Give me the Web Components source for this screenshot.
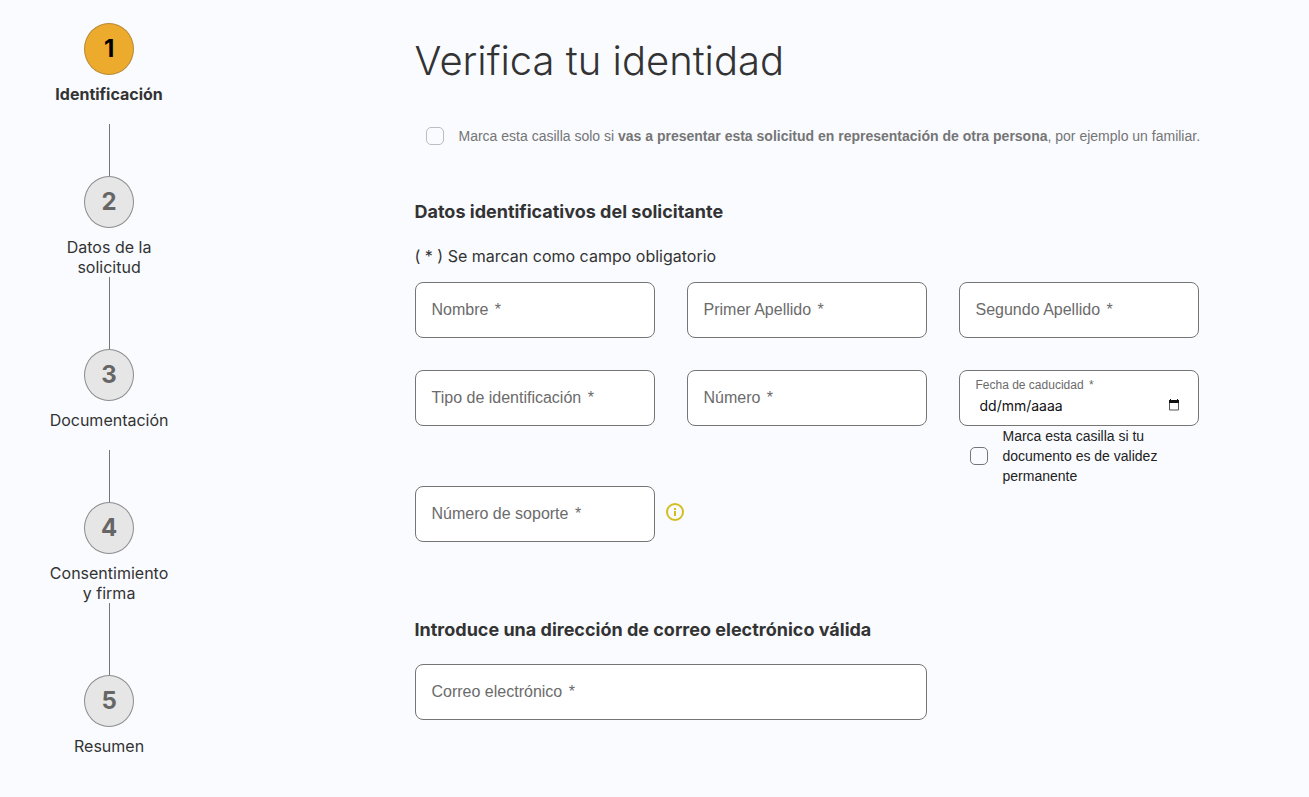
<!DOCTYPE html>
<html lang="es">
<head>
<meta charset="utf-8">
<meta name="viewport" content="width=device-width, initial-scale=1">
<title>Verifica tu identidad</title>
<style>
	body {
		margin: 0;
		background: #f9fbff;
		color: #333;
		font: 16px/20px Inter, sans-serif;
	}
</style>
</head>
<body>

<app-layout>
	<step-list slot="aside">
		<step-item number="1" active>Identificación</step-item>
		<step-item number="2" tall>Datos de la solicitud</step-item>
		<step-item number="3">Documentación</step-item>
		<step-item number="4" tall>Consentimiento y firma</step-item>
		<step-item number="5">Resumen</step-item>
	</step-list>

	<page-title>Verifica tu identidad</page-title>
	<check-field muted>Marca esta casilla solo si <b>vas a presentar esta solicitud en representación de otra persona</b>, por ejemplo un familiar.</check-field>

	<form-section heading="Datos identificativos del solicitante" note="( * ) Se marcan como campo obligatorio">
		<text-field label="Nombre"></text-field>
		<text-field label="Primer Apellido"></text-field>
		<text-field label="Segundo Apellido"></text-field>
		<select-field label="Tipo de identificación"></select-field>
		<text-field label="Número"></text-field>
		<date-field label="Fecha de caducidad">
			<check-field>Marca esta casilla si tu documento es de validez permanente</check-field>
		</date-field>
		<text-field label="Número de soporte" info="Ayuda sobre el número de soporte"></text-field>
	</form-section>

	<form-section heading="Introduce una dirección de correo electrónico válida">
		<text-field label="Correo electrónico" type="email" wide></text-field>
	</form-section>
</app-layout>

<script>
// Estilos comunes de los campos con borde
const fieldStyles = `
	:host { display: block; padding-bottom: 32px; font-family: "Liberation Sans", Arial, sans-serif; }
	.row { display: grid; position: relative; }
	.box {
		display: grid;
		box-sizing: border-box;
		height: 56px;
		border: 1px solid #757575;
		border-radius: 8px;
		background: #fff;
	}
	.box > * { grid-area: 1 / 1; }
	.box:focus-within { border-color: #e9a92b; }
	label {
		align-self: center;
		padding: 0 16px;
		color: #6b6b6b;
		font-size: 16px;
		line-height: 24px;
		pointer-events: none;
		z-index: 1;
	}
	label span { margin-left: 2px; }
	input, select {
		appearance: none;
		box-sizing: border-box;
		width: 100%;
		min-width: 0;
		border: 0;
		outline: 0;
		border-radius: 8px;
		padding: 16px 16px 0;
		background: transparent;
		color: #222;
		font: 16px/24px "Liberation Sans", Arial, sans-serif;
	}
	.box:focus-within label.float, input:not(:placeholder-shown) + label.float {
		align-self: start;
		font-size: 12px;
	}
`;

class AppLayout extends HTMLElement {
	constructor() {
		super();
		this.attachShadow({ mode: 'open' });
		this.shadowRoot.innerHTML = `
			<style>
				:host { display: grid; grid-template-columns: 1fr 5fr; }
				main { padding: 36px 32px 36px 18%; min-width: 0; }
			</style>
			<aside><slot name="aside"></slot></aside>
			<main><slot></slot></main>
		`;
	}
}
customElements.define('app-layout', AppLayout);

class StepList extends HTMLElement {
	constructor() {
		super();
		this.attachShadow({ mode: 'open' });
		this.shadowRoot.innerHTML = `
			<style>
				:host { display: block; }
				nav { display: flex; flex-direction: column; padding-top: 23px; }
			</style>
			<nav aria-label="Pasos"><slot></slot></nav>
		`;
	}
}
customElements.define('step-list', StepList);

class StepItem extends HTMLElement {
	constructor() {
		super();
		this.attachShadow({ mode: 'open' });
	}

	connectedCallback() {
		this.shadowRoot.innerHTML = `
			<style>
				:host { display: flex; flex-direction: column; align-items: center; text-align: center; }
				.circle {
					display: grid;
					place-items: center;
					box-sizing: border-box;
					width: 50px;
					height: 52px;
					border: 1px solid #8c8c8c;
					border-radius: 50%;
					background: #e6e6e6;
					color: #666;
					font-size: 24px;
					font-weight: 700;
				}
				.label { width: 120px; min-height: 40px; margin-top: 9px; }
				.line { width: 1px; height: 52px; background: #757575; }
				:host([tall]) .line { height: 72px; }
				:host(:last-of-type) .line { display: none; }
				:host([active]) .circle { background: #edab2d; border-color: #b98a35; color: #000; }
				:host([active]) .label { font-weight: 700; }
			</style>
			<div class="circle">${this.getAttribute('number')}</div>
			<div class="label"><slot></slot></div>
			<div class="line"></div>
		`;
	}
}
customElements.define('step-item', StepItem);

class PageTitle extends HTMLElement {
	constructor() {
		super();
		this.attachShadow({ mode: 'open' });
		this.shadowRoot.innerHTML = `
			<style>
				:host { display: block; margin-bottom: 40px; }
				h1 { margin: 0; font-size: 40px; line-height: 50px; font-weight: 300; }
			</style>
			<h1><slot></slot></h1>
		`;
	}
}
customElements.define('page-title', PageTitle);

class CheckField extends HTMLElement {
	constructor() {
		super();
		this.attachShadow({ mode: 'open' });
		this.shadowRoot.innerHTML = `
			<style>
				:host { display: block; font-family: "Liberation Sans", Arial, sans-serif; }
				:host([muted]) { margin-bottom: 10px; }
				label {
					display: flex;
					align-items: center;
					gap: 15px;
					padding-left: 11px;
					color: #222;
					font-size: 14px;
					line-height: 20px;
				}
				input {
					appearance: none;
					flex: none;
					width: 18px;
					height: 18px;
					margin: 0;
					border: 1px solid #757575;
					border-radius: 5px;
				}
				input:checked { background: #edab2d; }
				:host([muted]) label { color: #757575; }
				:host([muted]) input { border-color: #bdbdbd; }
			</style>
			<label><input type="checkbox"><span><slot></slot></span></label>
		`;
	}
}
customElements.define('check-field', CheckField);

class FormSection extends HTMLElement {
	constructor() {
		super();
		this.attachShadow({ mode: 'open' });
	}

	connectedCallback() {
		const note = this.getAttribute('note');
		this.shadowRoot.innerHTML = `
			<style>
				:host { display: block; max-width: 784px; padding-top: 46px; }
				h2 { margin: 0; font-size: 18px; line-height: 20px; font-weight: 700; }
				p { margin: 24px 0 0; }
				.grid {
					display: grid;
					grid-template-columns: repeat(3, 1fr);
					column-gap: 32px;
					margin-top: ${note ? 16 : 24}px;
				}
				::slotted([wide]) { grid-column: span 2; }
			</style>
			<section>
				<h2>${this.getAttribute('heading')}</h2>
				${note ? `<p>${note}</p>` : ''}
				<div class="grid"><slot></slot></div>
			</section>
		`;
	}
}
customElements.define('form-section', FormSection);

class TextField extends HTMLElement {
	constructor() {
		super();
		this.attachShadow({ mode: 'open' });
	}

	connectedCallback() {
		const info = this.getAttribute('info');
		this.shadowRoot.innerHTML = `
			<style>
				${fieldStyles}
				/* el icono cuelga en el hueco entre columnas */
				button {
					position: absolute;
					left: 100%;
					top: 16px;
					margin-left: 10px;
					padding: 1px;
					border: 0;
					background: none;
					line-height: 0;
					cursor: pointer;
				}
			</style>
			<div class="row">
				<div class="box">
					<input id="field" type="${this.getAttribute('type') || 'text'}" placeholder=" " required>
					<label class="float" for="field">${this.getAttribute('label')} <span>*</span></label>
				</div>
				${info ? `
					<button type="button" aria-label="${info}">
						<svg width="18" height="18" viewBox="0 0 18 18">
							<circle cx="9" cy="9" r="8" fill="none" stroke="#d3be22" stroke-width="2"/>
							<path d="M8 5h2v2H8zM8 8h2v5H8z" fill="#d3be22"/>
						</svg>
					</button>
				` : ''}
			</div>
		`;
	}
}
customElements.define('text-field', TextField);

class SelectField extends HTMLElement {
	constructor() {
		super();
		this.attachShadow({ mode: 'open' });
	}

	connectedCallback() {
		this.shadowRoot.innerHTML = `
			<style>${fieldStyles}</style>
			<div class="box">
				<select id="field" required><option value=""></option></select>
				<label for="field">${this.getAttribute('label')} <span>*</span></label>
			</div>
		`;
	}
}
customElements.define('select-field', SelectField);

class DateField extends HTMLElement {
	constructor() {
		super();
		this.attachShadow({ mode: 'open' });
	}

	connectedCallback() {
		this.shadowRoot.innerHTML = `
			<style>
				${fieldStyles}
				:host { padding-bottom: 0; }
				.box { grid-template-columns: 1fr auto; }
				label { align-self: start; font-size: 12px; line-height: 28px; }
				input {
					padding: 16px 0 0 20px;
					font: 14px/20px Inter, sans-serif;
				}
				input::placeholder { color: #111; opacity: 1; }
				.box > button {
					grid-area: 1 / 2;
					align-self: end;
					margin: 0 18px 14px 0;
					padding: 0;
					border: 0;
					background: none;
					line-height: 0;
				}
			</style>
			<div class="box">
				<input id="field" type="text" placeholder="dd/mm/aaaa" required>
				<label for="field">${this.getAttribute('label')} <span>*</span></label>
				<button type="button" aria-label="Abrir calendario">
					<svg width="12" height="12" viewBox="0 0 12 12">
						<path fill="none" stroke="#555" d="M1.500 3v8h9V3"/>
						<path fill="#111" d="M2 0h1v1h6V0h1v1h1v3H1V1h1z"/>
					</svg>
				</button>
			</div>
			<slot></slot>
		`;
	}
}
customElements.define('date-field', DateField);
</script>
</body>
</html>
